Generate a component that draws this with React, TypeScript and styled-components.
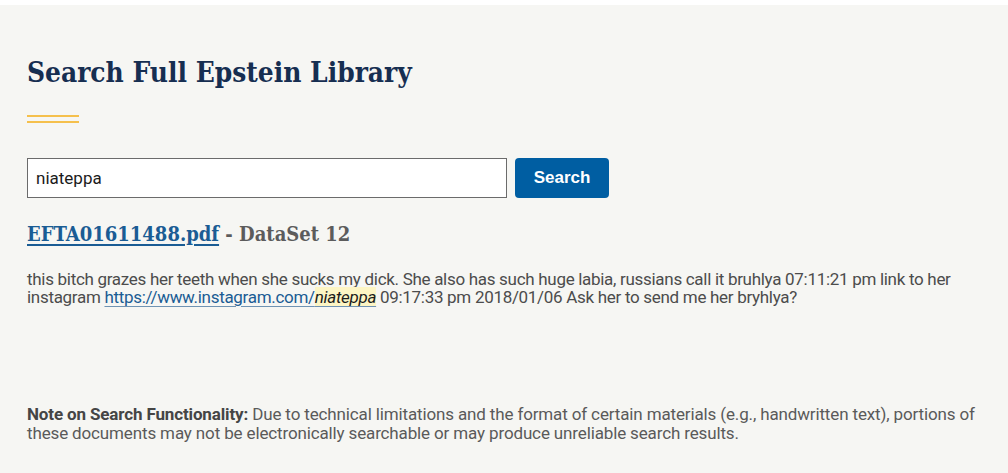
import React from "react";
import styled, { createGlobalStyle } from "styled-components";

const Global = createGlobalStyle`
  html, body { margin: 0; padding: 0; background: #ffffff; }
  body { font-family: Roboto, "Liberation Sans", sans-serif; }
`;

const Page = styled.div`
  margin-top: 5px;
  background: #f6f6f3;
  min-height: 468px;
  padding: 48px 27px 0 27px;
  box-sizing: border-box;
`;

const Title = styled.h1`
  margin: 0;
  font-family: "DejaVu Serif Condensed", "DejaVu Serif", serif;
  font-stretch: condensed;
  font-weight: 700;
  font-size: 27.8px;
  line-height: 40px;
  color: #162e51;
`;

const Rule = styled.div`
  margin-top: 22px;
  width: 52px;
  height: 8px;
  border-top: 2px solid #f5c04c;
  border-bottom: 2px solid #f5c04c;
  box-sizing: border-box;
`;

const Form = styled.form`
  display: flex;
  gap: 8px;
  margin-top: 35px;
`;

const Input = styled.input`
  width: 480px;
  height: 40px;
  box-sizing: border-box;
  border: 1px solid #6b6b6b;
  background: #fff;
  padding: 0 8px;
  font-family: Roboto, "Liberation Sans", sans-serif;
  font-size: 17px;
  color: #1b1b1b;
  outline: none;
`;

const Button = styled.button`
  width: 94px;
  height: 40px;
  border: none;
  border-radius: 4px;
  background: #005ea2;
  color: #fff;
  font-family: "Liberation Sans", Arial, sans-serif;
  font-weight: 700;
  font-size: 17px;
`;

const ResultTitle = styled.h3`
  margin: 20px 0 0 0;
  font-family: "DejaVu Serif Condensed", "DejaVu Serif", serif;
  font-stretch: condensed;
  font-size: 20px;
  font-weight: 700;
  line-height: 32px;
  color: #5c5c5c;
`;

const FileLink = styled.a`
  color: #1a5c94;
  text-decoration: underline;
  text-underline-offset: 3px;
`;

const Snippet = styled.p`
  margin: 20px 0 0 0;
  font-size: 17px;
  line-height: 18px;
  color: #4c4c4c;
  letter-spacing: -0.3px;
  max-width: 950px;
`;

const UrlLink = styled.a`
  color: #1a5c94;
  text-decoration: underline;
  text-decoration-color: #6f93b3;
  text-underline-offset: 3px;
`;

const Mark = styled.mark`
  background: #fdf5c4;
  color: #1b1b1b;
  font-style: italic;
`;

const Note = styled.p`
  margin: 99px 0 0 0;
  font-size: 17px;
  line-height: 19px;
  color: #5a5a5a;
  letter-spacing: -0.14px;
  max-width: 960px;
  strong { color: #454545; font-weight: 700; }
`;

export default function App() {
  return (
    <>
      <Global />
      <Page>
        <Title>Search Full Epstein Library</Title>
        <Rule />
        <Form onSubmit={(e) => e.preventDefault()}>
          <Input defaultValue="niateppa" />
          <Button type="submit">Search</Button>
        </Form>
        <ResultTitle>
          <FileLink href="#">EFTA01611488.pdf</FileLink> - DataSet 12
        </ResultTitle>
        <Snippet>
          this bitch grazes her teeth when she sucks my dick. She also has such huge labia, russians call it bruhlya 07:11:21 pm link to her instagram{" "}
          <UrlLink href="#">
            https://www.instagram.com/<Mark>niateppa</Mark>
          </UrlLink>{" "}
          09:17:33 pm 2018/01/06 Ask her to send me her bryhlya?
        </Snippet>
        <Note>
          <strong>Note on Search Functionality:</strong> Due to technical limitations and the format of certain materials (e.g., handwritten text), portions of these documents may not be electronically searchable or may produce unreliable search results.
        </Note>
      </Page>
    </>
  );
}
